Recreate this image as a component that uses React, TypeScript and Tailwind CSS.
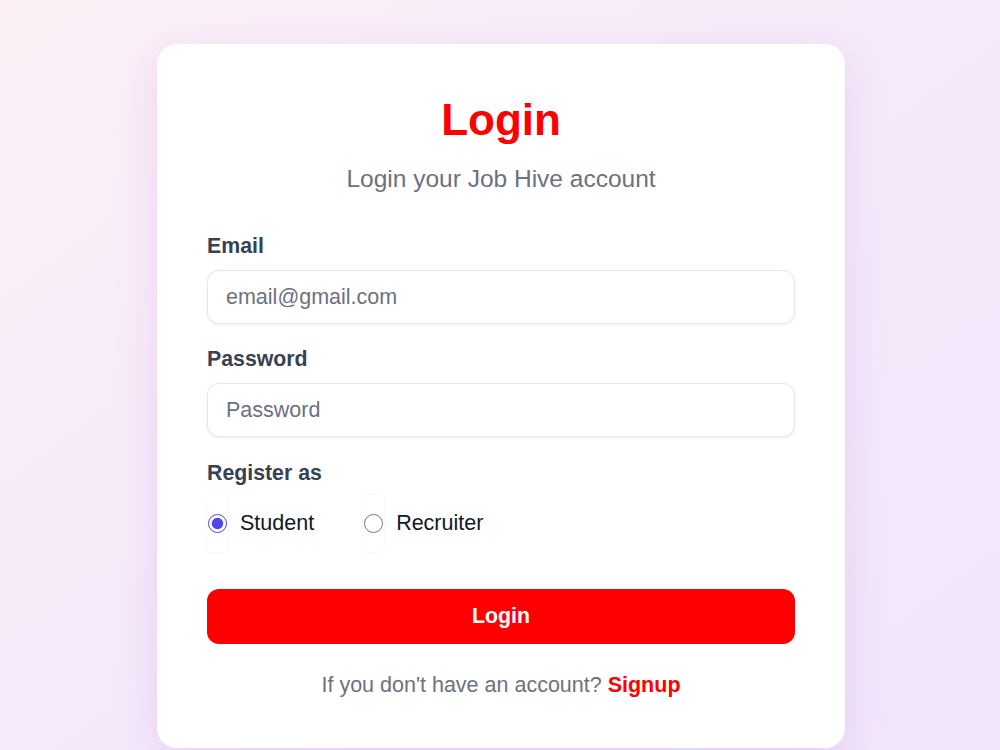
import { useState } from "react"

export default function App() {
  const [role, setRole] = useState("student")

  const roles = [
    { value: "student", label: "Student" },
    { value: "recruiter", label: "Recruiter" },
  ]

  return (
    <div className="min-h-[750px] w-full bg-gradient-to-br from-[#fcf0f6] via-[#f6e9fa] to-[#f2e4fb] pt-[44px] font-['Liberation_Sans',Arial,sans-serif]">
      <div className="mx-auto w-[688px] translate-x-[1px] rounded-[20px] bg-white px-[50px] pt-[50px] pb-[50px] shadow-[0_12px_40px_rgba(160,110,210,0.18)]">
        <h1 className="text-center text-[44px] leading-[52px] font-bold text-[#ff0000]">Login</h1>
        <p className="mt-[18px] text-center text-[24.5px] leading-[30px] text-[#6b7280]">
          Login your Job Hive account
        </p>

        <label className="mt-[39px] block text-[21.3px] leading-[26px] font-bold text-[#374151]">Email</label>
        <input
          type="email"
          placeholder="email@gmail.com"
          className="mt-[11px] block h-[54px] w-full rounded-[12px] border border-[#e5e7eb] bg-white px-[18px] text-[21.5px] shadow-[0_1px_3px_rgba(0,0,0,0.08)] outline-none placeholder:text-[#6b7280]"
        />

        <label className="mt-[22px] block text-[21.3px] leading-[26px] font-bold text-[#374151]">Password</label>
        <input
          type="password"
          placeholder="Password"
          className="mt-[11px] block h-[54px] w-full rounded-[12px] border border-[#e5e7eb] bg-white px-[18px] text-[21.5px] shadow-[0_1px_3px_rgba(0,0,0,0.08)] outline-none placeholder:text-[#6b7280]"
        />

        <p className="mt-[23px] text-[21.3px] leading-[26px] font-bold text-[#374151]">Register as</p>
        <div className="mt-[9px] flex items-center gap-[49px]">
          {roles.map((r) => (
            <label key={r.value} className="flex cursor-pointer items-center gap-[12px]">
              <span className="flex h-[57px] w-[21px] items-center justify-center rounded-[4px] shadow-[0_0_3px_rgba(0,0,0,0.06)]">
                <input
                  type="radio"
                  name="role"
                  checked={role === r.value}
                  onChange={() => setRole(r.value)}
                  className="m-0 h-[19px] w-[19px] accent-[#4f46e5]"
                />
              </span>
              <span className="text-[21.5px] text-[#111827]">{r.label}</span>
            </label>
          ))}
        </div>

        <button className="mt-[37px] block h-[55px] w-full rounded-[12px] bg-[#ff0000] text-[21.3px] font-bold text-white">
          Login
        </button>

        <p className="mt-[28px] text-center text-[21.5px] leading-[26px] text-[#6b7280]">
          If you don't have an account? <a className="font-bold text-[#ff0000]">Signup</a>
        </p>
      </div>
    </div>
  )
}
